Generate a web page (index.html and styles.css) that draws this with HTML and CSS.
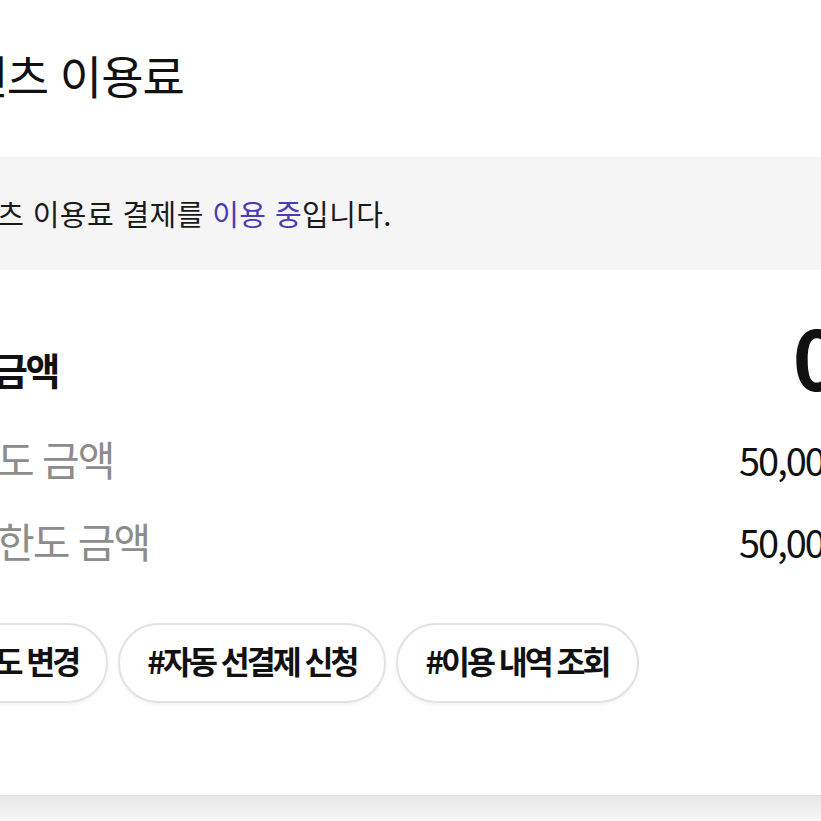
FILE: index.html
```html
<!DOCTYPE html>
<html lang="ko">
<head>
    <meta charset="UTF-8">
    <meta name="viewport" content="width=device-width, initial-scale=1.0">
    <title>콘텐츠 이용료</title>
    <link rel="stylesheet" href="styles.css">
</head>
<body>
    <div class="page">
        <h1 class="title">콘텐츠 이용료</h1>

        <div class="notice">
            콘텐츠 이용료 결제를 <span class="accent">이용 중</span>입니다.
        </div>

        <div class="rows">
            <div class="row row-main">
                <span class="label">이용 금액</span>
                <span class="value">0<span class="unit">원</span></span>
            </div>
            <div class="row">
                <span class="label">월 한도 금액</span>
                <span class="value">50,000원</span>
            </div>
            <div class="row">
                <span class="label">잔여 한도 금액</span>
                <span class="value">50,000원</span>
            </div>
        </div>

        <div class="tags">
            <button class="tag">#한도 변경</button>
            <button class="tag">#자동 선결제 신청</button>
            <button class="tag">#이용 내역 조회</button>
        </div>
    </div>
    <div class="footer"></div>
</body>
</html>
```

FILE: styles.css
```css
html, body {
    margin: 0;
    overflow: hidden;
    background: #fff;
}
body {
    font-family: "Noto Sans CJK KR", "Noto Sans", sans-serif;
    color: #111;
}
.page {
    width: 1000px;
    margin-left: -100px;
    padding: 0 24px;
    box-sizing: border-box;
}
.title {
    margin: 44px 0 0;
    font-size: 46px;
    font-weight: 400;
    line-height: 60px;
    letter-spacing: -1px;
}
.notice {
    margin-top: 53px;
    padding: 40px 26px 40px 19px;
    background: #f5f5f5;
    font-size: 29px;
    line-height: 33px;
    letter-spacing: 0.4px;
    color: #1a1a1a;
}
.accent {
    color: #4a3db3;
}
.rows {
    margin-top: 45px;
    display: flex;
    flex-direction: column;
}
.row {
    display: flex;
    justify-content: space-between;
    align-items: baseline;
    line-height: 1;
    margin-top: 41px;
}
.label {
    margin-left: -8px;
    font-size: 41px;
    letter-spacing: -2px;
    color: #8c8c8c;
}
.value {
    font-size: 38px;
    letter-spacing: -2px;
    color: #111;
}
.row-main {
    margin-top: 0;
    align-items: flex-end;
}
.row-main .label {
    margin-left: -4px;
    margin-bottom: 9px;
    font-size: 38px;
    font-weight: 700;
    letter-spacing: -2.5px;
    color: #111;
}
.row-main .value {
    font-size: 82px;
    font-weight: 700;
    letter-spacing: 0;
}
.unit {
    font-size: 38px;
    font-weight: 700;
}
.tags {
    margin-top: 62px;
    display: flex;
    gap: 10px;
}
.tag {
    box-sizing: border-box;
    height: 80px;
    font-family: inherit;
    font-size: 31.5px;
    font-weight: 700;
    letter-spacing: -3px;
    color: #111;
    background: #fff;
    border: 2px solid #e2e2e2;
    border-radius: 40px;
    padding: 0 28px 6px 27px;
    line-height: 68px;
    box-shadow: 0 2px 3px rgba(0, 0, 0, 0.05);
}
.footer {
    margin-top: 92px;
    height: 40px;
    border-top: 1px solid #dedede;
    background: linear-gradient(#e8e8e8, #f7f7f7 26px);
}
```
